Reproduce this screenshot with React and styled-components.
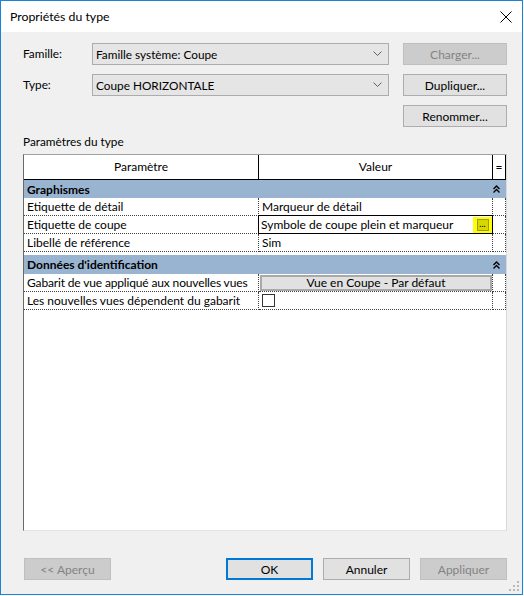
import React from 'react';
import styled, { createGlobalStyle } from 'styled-components';

const Global = createGlobalStyle`
  html, body {
    margin: 0;
    padding: 0;
    background: #ffffff;
  }
  * {
    box-sizing: border-box;
  }
`;

const font = `Lato, "Noto Sans", sans-serif`;

const Window = styled.div`
  position: relative;
  width: 523px;
  height: 595px;
  border: 1px solid #1883d7;
  background: #f0f0f0;
  display: flex;
  flex-direction: column;
  font-family: ${font};
  font-size: 11.8px;
  color: #000;
`;

const TitleBar = styled.div`
  height: 31px;
  background: #ffffff;
  display: flex;
  align-items: center;
  justify-content: space-between;
  padding: 0 10px 0 9px;
  font-size: 12.3px;
`;

const Body = styled.div`
  flex: 1;
  display: flex;
  flex-direction: column;
  padding: 11px 15px 14px 21px;
`;

const TopGrid = styled.div`
  display: grid;
  grid-template-columns: 70px 297px 1fr;
  row-gap: 9px;
  align-items: center;
  justify-items: start;
`;

const Label = styled.div`
  line-height: 22px;
  padding-left: 1px;
`;

const Combo = styled.div`
  width: 297px;
  height: 22px;
  background: #e5e5e5;
  border: 1px solid #acacac;
  display: flex;
  align-items: center;
  justify-content: space-between;
  padding: 0 6px 0 3px;
`;

const Button = styled.button`
  height: 22px;
  width: ${p => p.$w || 104}px;
  justify-self: end;
  font-family: ${font};
  font-size: 12px;
  padding: 0;
  background: ${p => (p.disabled ? '#cccccc' : '#e1e1e1')};
  border: ${p => (p.$primary ? '2px solid #0078d7' : p.disabled ? '1px solid #bfbfbf' : '1px solid #adadad')};
  color: ${p => (p.disabled ? '#838383' : '#000')};
`;

const SectionTitle = styled.div`
  margin-top: 8px;
  padding-left: 1px;
  line-height: 14px;
`;

const Table = styled.div`
  margin-top: 5px;
  margin-left: 1px;
  width: 484px;
  height: 377px;
  background: #ffffff;
  border-top: 1px solid #a0a0a0;
  border-left: 1px solid #696969;
  border-right: 1px solid #d9d9d9;
  border-bottom: 1px solid #e3e3e3;
  display: flex;
  flex-direction: column;
  font-size: 12px;
`;

const Row = styled.div`
  display: grid;
  grid-template-columns: 235px 234px 13px;
  height: ${p => p.$h || 18}px;
`;

const HeadCell = styled.div`
  border-right: 1px solid #000;
  border-bottom: 1px solid #000;
  display: flex;
  align-items: center;
  justify-content: center;
  background: #ffffff;
  padding-bottom: 1px;
`;

const Band = styled.div`
  height: ${p => p.$h || 18}px;
  margin-top: ${p => p.$mt || 0}px;
  background: #99b4d1;
  display: flex;
  align-items: center;
  justify-content: space-between;
  padding: 0 6px 0 3px;
  font-weight: bold;
  color: #000;
`;

const Cell = styled.div`
  border-right: 1px dotted #404040;
  border-bottom: 1px dotted #404040;
  display: flex;
  align-items: center;
  padding-left: ${p => (p.$flush ? 0 : 3)}px;
  white-space: nowrap;
  overflow: hidden;
  letter-spacing: ${p => (p.$tight ? '-0.15px' : 'normal')};
`;

const SelectedCell = styled.div`
  border: 1px solid #000;
  display: flex;
  align-items: center;
  justify-content: space-between;
  padding-left: 2px;
  margin-left: -1px;
  margin-top: -1px;
  white-space: nowrap;
`;

const Browse = styled.div`
  width: 19px;
  height: 16px;
  background: #ffff00;
  display: flex;
  align-items: center;
  justify-content: center;
`;

const BrowseInner = styled.div`
  width: 12px;
  height: 12px;
  background: #d8d800;
  border: 1px solid #9a9a20;
  font-size: 9px;
  line-height: 8px;
  text-align: center;
  color: #000;
`;

const ValueButton = styled.div`
  width: 100%;
  height: 16px;
  margin-left: 1px;
  background: #e1e1e1;
  border: 2px solid #a9a9a9;
  display: flex;
  align-items: center;
  justify-content: center;
  white-space: nowrap;
`;

const Check = styled.div`
  width: 13px;
  height: 13px;
  border: 1px solid #333;
  background: #fff;
`;

const Footer = styled.div`
  margin-top: 27px;
  margin-left: 2px;
  display: flex;
  gap: 10px;
`;

const Spacer = styled.div`
  flex: 1;
`;

const Grip = styled.svg`
  position: absolute;
  right: 3px;
  bottom: 3px;
`;

const Chevron = () => (
  <svg width="9" height="6" viewBox="0 0 9 6">
    <polyline points="0.5,0.5 4.5,4.5 8.5,0.5" fill="none" stroke="#606060" strokeWidth="1" />
  </svg>
);

const DoubleUp = () => (
  <svg width="7" height="8" viewBox="0 0 7 8">
    <polyline points="0.5,4 3.5,1 6.5,4" fill="none" stroke="#000" strokeWidth="1.4" />
    <polyline points="0.5,7.5 3.5,4.5 6.5,7.5" fill="none" stroke="#000" strokeWidth="1.4" />
  </svg>
);

const Close = () => (
  <svg width="12" height="12" viewBox="0 0 12 12">
    <path d="M0.5 0.5 L11.5 11.5 M11.5 0.5 L0.5 11.5" stroke="#000" strokeWidth="1" />
  </svg>
);

export default function App() {
  return (
    <>
      <Global />
      <Window>
        <TitleBar>
          <span>Propriétés du type</span>
          <Close />
        </TitleBar>
        <Body>
          <TopGrid>
            <Label>Famille:</Label>
            <Combo>
              <span>Famille système: Coupe</span>
              <Chevron />
            </Combo>
            <Button disabled>Charger...</Button>
            <Label>Type:</Label>
            <Combo>
              <span>Coupe HORIZONTALE</span>
              <Chevron />
            </Combo>
            <Button>Dupliquer...</Button>
            <div />
            <div />
            <Button>Renommer...</Button>
          </TopGrid>
          <SectionTitle>Paramètres du type</SectionTitle>
          <Table>
            <Row $h={25}>
              <HeadCell>Paramètre</HeadCell>
              <HeadCell>Valeur</HeadCell>
              <HeadCell>=</HeadCell>
            </Row>
            <Band>
              <span>Graphismes</span>
              <DoubleUp />
            </Band>
            <Row>
              <Cell>Etiquette de détail</Cell>
              <Cell>Marqueur de détail</Cell>
              <Cell />
            </Row>
            <Row>
              <Cell>Etiquette de coupe</Cell>
              <SelectedCell>
                <span>Symbole de coupe plein et marqueur</span>
                <Browse>
                  <BrowseInner>...</BrowseInner>
                </Browse>
              </SelectedCell>
              <Cell />
            </Row>
            <Row>
              <Cell>Libellé de référence</Cell>
              <Cell>Sim</Cell>
              <Cell />
            </Row>
            <Band $mt={3} $h={19}>
              <span>Données d'identification</span>
              <DoubleUp />
            </Band>
            <Row>
              <Cell $tight>Gabarit de vue appliqué aux nouvelles vues</Cell>
              <Cell $flush>
                <ValueButton>Vue en Coupe - Par défaut</ValueButton>
              </Cell>
              <Cell />
            </Row>
            <Row>
              <Cell>Les nouvelles vues dépendent du gabarit</Cell>
              <Cell>
                <Check />
              </Cell>
              <Cell />
            </Row>
          </Table>
          <Footer>
            <Button disabled $w={87}>&lt;&lt; Aperçu</Button>
            <Spacer />
            <Button $primary $w={87}>OK</Button>
            <Button $w={87}>Annuler</Button>
            <Button disabled $w={87}>Appliquer</Button>
          </Footer>
        </Body>
        <Grip width="10" height="10" viewBox="0 0 10 10">
          {[[8, 0], [8, 4], [4, 4], [8, 8], [4, 8], [0, 8]].map(([x, y]) => (
            <rect key={`${x}-${y}`} x={x} y={y} width="2" height="2" fill="#b8b8b8" />
          ))}
        </Grip>
      </Window>
    </>
  );
}
